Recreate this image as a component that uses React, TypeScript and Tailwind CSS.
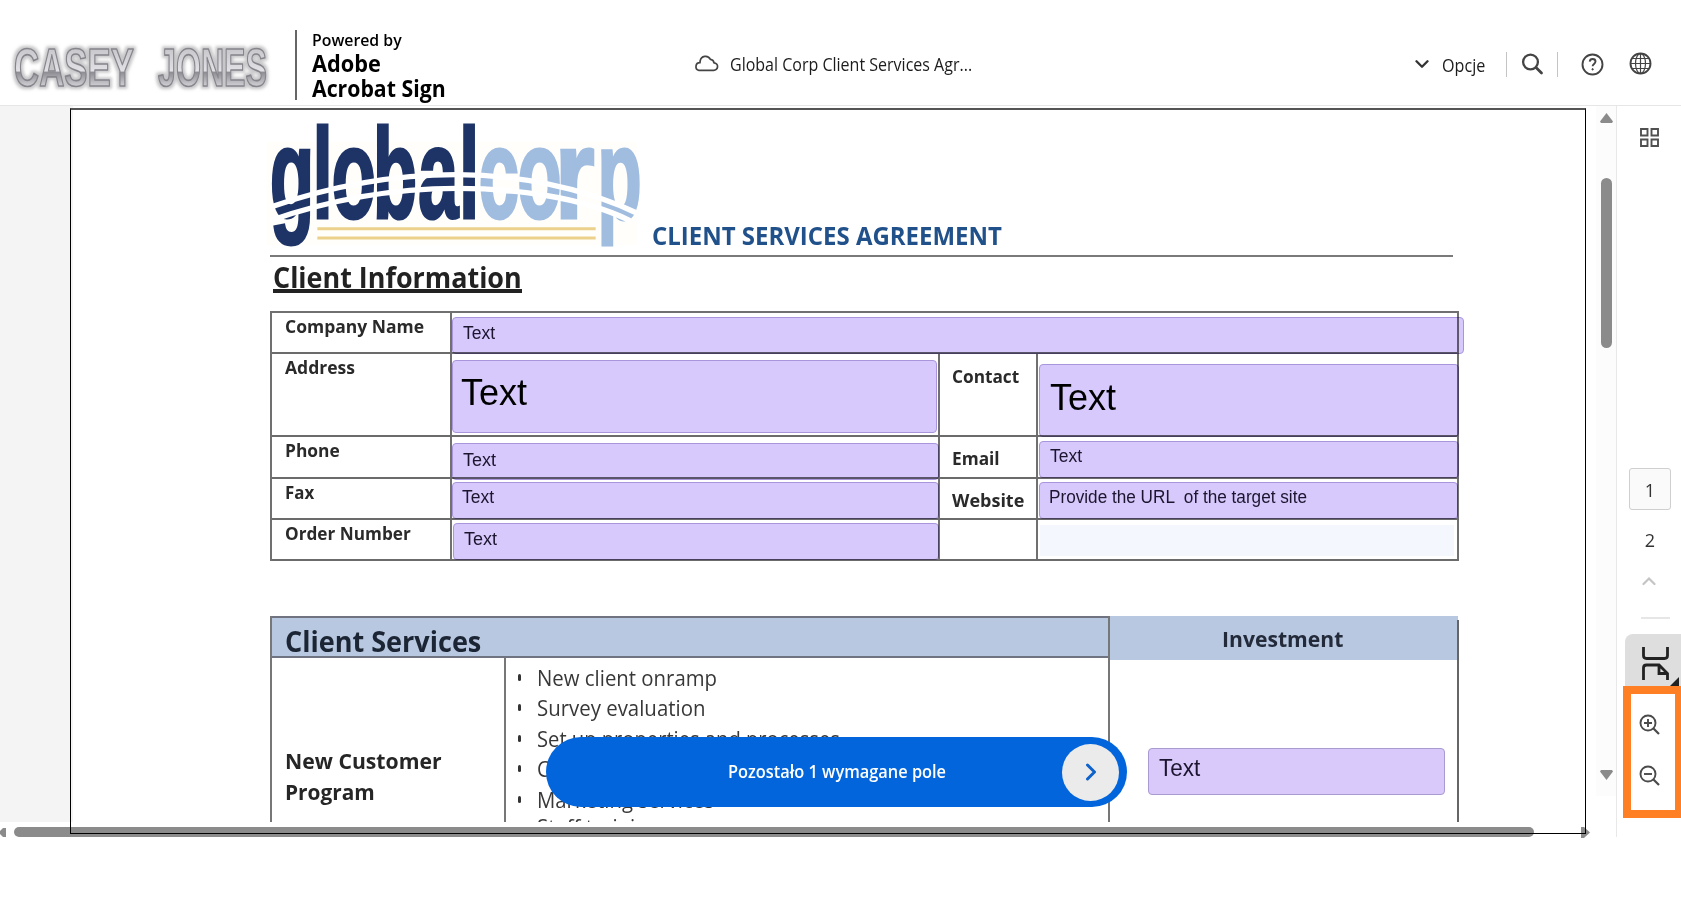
import { useLayoutEffect, useRef, useState } from "react";
import clsx from "clsx";

// Condenses or stretches a line of text so that it takes exactly `w` pixels.
function Fit({ w, className, children }: { w: number; className?: string; children: string }) {
  const ref = useRef<HTMLSpanElement>(null);
  const [scale, setScale] = useState(1);

  useLayoutEffect(() => {
    if (ref.current) setScale(w / ref.current.offsetWidth);
  }, [w, children]);

  return (
    <span className={clsx("flex leading-none", className)} style={{ width: w }}>
      <span ref={ref} className="shrink-0 origin-left whitespace-pre" style={{ transform: `scaleX(${scale})` }}>
        {children}
      </span>
    </span>
  );
}

const fields = [
  { box: "left-[379px] top-[211px] w-[1012px] h-[37px] pl-[10px] pt-[7px]", text: "Text", w: 32 },
  { box: "left-[379px] top-[254px] w-[485px] h-[73px] pl-[8px] pt-[14px]", text: "Text", w: 66, big: true },
  { box: "left-[966px] top-[258px] w-[420px] h-[73px] pl-[10px] pt-[15px]", text: "Text", w: 66, big: true },
  { box: "left-[379px] top-[337px] w-[487px] h-[37px] pl-[10px] pt-[8px]", text: "Text", w: 33 },
  { box: "left-[966px] top-[335px] w-[420px] h-[37px] pl-[10px] pt-[6px]", text: "Text", w: 32 },
  { box: "left-[379px] top-[376px] w-[487px] h-[37px] pl-[9px] pt-[6px]", text: "Text", w: 32 },
  { box: "left-[966px] top-[376px] w-[419px] h-[37px] pl-[9px] pt-[6px]", text: "Provide the URL  of the target site", w: 258 },
  { box: "left-[380px] top-[417px] w-[486px] h-[37px] pl-[10px] pt-[7px]", text: "Text", w: 33 },
];

const rows = [
  { h: "h-[41px]", label: "Company Name", w: 139 },
  { h: "h-[83px]", label: "Address", w: 70, right: "Contact", rw: 67, rp: "pt-[13px]" },
  { h: "h-[42px]", label: "Phone", w: 55, right: "Email", rw: 48, rp: "pt-[12px]" },
  { h: "h-[41px]", label: "Fax", w: 29, right: "Website", rw: 72, rp: "pt-[12px]" },
  { h: "h-[41px]", label: "Order Number", w: 126, right: "", rw: 0, rp: "" },
];

const services = [
  { text: "New client onramp", w: 180 },
  { text: "Survey evaluation", w: 168 },
  { text: "Set up properties and processes", w: 303 },
  { text: "Contract services", w: 160 },
  { text: "Marketing services", w: 177 },
  { text: "Staff training", w: 122 },
];

function CaseyLogo() {
  return (
    <svg width="278" height="60" viewBox="0 0 278 60" className="block overflow-visible">
      <defs>
        <linearGradient id="steel" gradientUnits="userSpaceOnUse" x1="0" y1="10" x2="0" y2="49">
          <stop offset="0" stopColor="#c6c5ca" />
          <stop offset="0.62" stopColor="#e2e1e6" />
          <stop offset="0.64" stopColor="#8d8c92" />
          <stop offset="1" stopColor="#d0cfd4" />
        </linearGradient>
        <filter id="halo" x="-10%" y="-30%" width="120%" height="160%">
          <feMorphology in="SourceAlpha" operator="dilate" radius="2" result="fat" />
          <feGaussianBlur in="fat" stdDeviation="1.8" result="soft" />
          <feFlood floodColor="#b4b4b7" floodOpacity="0.75" />
          <feComposite in2="soft" operator="in" result="glow" />
          <feMerge>
            <feMergeNode in="glow" />
            <feMergeNode in="SourceGraphic" />
          </feMerge>
        </filter>
      </defs>
      <g fontFamily="Liberation Sans" fontWeight="700" fontSize="53" strokeLinejoin="round" fill="url(#steel)" stroke="#86858b" strokeWidth="1.7" filter="url(#halo)">
        <text x="14" y="48.5" textLength="120" lengthAdjust="spacingAndGlyphs">CASEY</text>
        <text x="158" y="48.5" textLength="109" lengthAdjust="spacingAndGlyphs">JONES</text>
      </g>
    </svg>
  );
}

function GlobalCorpLogo() {
  return (
    <svg width="385" height="145" viewBox="0 0 1155 435" className="shrink-0 overflow-visible">
      <rect x="20" y="95" width="1110" height="310" fill="#fffefb" />
      <g fontFamily="Liberation Sans" fontWeight="700" fontSize="384" strokeWidth="9">
        <text transform="translate(0 324) scale(0.57 1)" x="51 276 376 594 831 1048" fill="#1e3467" stroke="#1e3467">global</text>
        <g fill="#a0bde0" stroke="#a0bde0">
          <text transform="translate(0 324) scale(0.57 1)" x="1150 1354">co</text>
          <text transform="translate(884 324) scale(0.8 1)">r</text>
          <text transform="translate(1012 324) scale(0.57 1)">p</text>
        </g>
      </g>
      <g fill="none" stroke="#fff" strokeWidth="16">
        <path d="M30 292C250 215 430 194 590 194S960 225 1150 318" />
        <path d="M30 332C250 255 430 235 590 235S960 258 1110 332" />
      </g>
      <path d="M172 356H1007M172 384H1007" stroke="#ecd18c" strokeWidth="9" />
    </svg>
  );
}

function Header() {
  return (
    <header className="flex h-[106px] border-b border-[#e6e6e6] text-black">
      <div className="w-[295px] pt-[37px]">
        <CaseyLogo />
      </div>
      <div className="mt-[30px] h-[70px] w-[2px] bg-[#666]" />
      <div className="w-[397px] pl-[15px] pt-[32px]">
        <Fit w={90} className="text-[16px] font-semibold">Powered by</Fit>
        <Fit w={69} className="mt-[4px] text-[23px] font-bold">Adobe</Fit>
        <Fit w={134} className="mt-[2px] text-[23px] font-bold">Acrobat Sign</Fit>
      </div>
      <svg className="mt-[53px]" width="25" height="20" viewBox="0 0 25 20" fill="none" stroke="#444" strokeWidth="1.7">
        <path d="M5 17.4h14.5a3.8 3.8 0 0 0 .5-7.6 4 4 0 0 0-3.6-3.4A5.4 5.4 0 0 0 6.2 8a5 5 0 0 0-.2 1.7A3.9 3.9 0 0 0 5 17.4Z" strokeLinejoin="round" />
      </svg>
      <div className="w-[696px] pl-[11px] pt-[55px] text-[#1c1c1c]">
        <Fit w={242} className="text-[18px] font-medium">Global Corp Client Services Agr...</Fit>
      </div>
      <svg className="mt-[59px]" width="14" height="11" viewBox="0 0 14 11" fill="none" stroke="#333" strokeWidth="2.3">
        <path d="M1.5 2.2 7 7.7l5.5-5.5" strokeLinecap="round" strokeLinejoin="round" />
      </svg>
      <div className="ml-[13px] mt-[56px] w-[64px] text-[#1c1c1c]">
        <Fit w={43} className="text-[18px] font-medium">Opcje</Fit>
      </div>
      <div className="mt-[52px] h-[25px] w-px bg-[#c4c4c4]" />
      <svg className="ml-[14px] mt-[53px]" width="23" height="23" viewBox="0 0 23 23" fill="none" stroke="#444" strokeWidth="2.3">
        <circle cx="9.5" cy="9" r="7.4" />
        <path d="m15 14.5 5.5 5.5" strokeWidth="2.8" strokeLinecap="round" />
      </svg>
      <div className="ml-[13px] mt-[52px] h-[25px] w-px bg-[#c4c4c4]" />
      <svg className="ml-[23px] mt-[53px]" width="23" height="23" viewBox="0 0 23 23" fill="none" stroke="#444" strokeWidth="1.9">
        <circle cx="11.5" cy="11.5" r="10" />
        <path d="M8.7 8.6c.2-1.7 1.4-2.6 2.9-2.6 1.7 0 2.9 1 2.9 2.5 0 2.3-2.9 2.5-2.9 4.7" />
        <circle cx="11.6" cy="16.3" r="0.7" fill="#444" strokeWidth="1" />
      </svg>
      <svg className="ml-[25px] mt-[52px]" width="23" height="23" viewBox="0 0 23 23" fill="none" stroke="#444" strokeWidth="1.2">
        <circle cx="11.5" cy="11.5" r="10" strokeWidth="1.9" />
        <ellipse cx="11.5" cy="11.5" rx="5" ry="10" />
        <path d="M11.5 1.5v20M1.5 11.5h20M3 6.5h17M3 16.5h17" />
      </svg>
    </header>
  );
}

function InfoTable() {
  return (
    <div className="mt-[18px] w-[1189px] border-l-2 border-t-2 border-[#707070]">
      {rows.map((r) => (
        <div key={r.label} className={clsx("flex border-b-2 border-[#6b6b6b] text-[18px] font-bold text-[#2a2a2a]", r.h)}>
          <div className="w-[180px] border-r-2 border-[#707070] pl-[13px] pt-[4px]">
            <Fit w={r.w}>{r.label}</Fit>
          </div>
          {r.right === undefined ? (
            <div className="w-[1007px] border-r-2 border-[#707070]" />
          ) : (
            <>
              <div className="w-[488px] border-r-2 border-[#707070]" />
              <div className={clsx("w-[98px] border-r-2 border-[#707070] pl-[12px]", r.rp)}>
                {r.right && <Fit w={r.rw}>{r.right}</Fit>}
              </div>
              <div className="w-[421px] border-r-2 border-[#707070] pb-[3px] pl-[2px] pr-[3px] pt-[5px]">
                {!r.right && <div className="h-full bg-[#f4f7fd]" />}
              </div>
            </>
          )}
        </div>
      ))}
    </div>
  );
}

function ServicesTable() {
  return (
    <div className="mt-[55px] flex h-[206px] w-[1189px] text-[#262626]">
      <div className="w-[840px] border-x-2 border-[#777]">
        <div className="h-[42px] border-y-2 border-[#6f7480] bg-[#b8c8e1] pl-[13px] pt-[9px] text-[#1c2533]">
          <Fit w={196} className="text-[28px] font-bold">Client Services</Fit>
        </div>
        <div className="flex h-[164px]">
          <div className="w-[234px] border-r-2 border-[#777] pl-[13px] pt-[91px] text-[22px] font-bold">
            <Fit w={157}>New Customer</Fit>
            <Fit w={90} className="mt-[9px]">Program</Fit>
          </div>
          <ul className="h-[164px] overflow-hidden pl-[12px] pt-[4px] text-[21.5px] text-[#383838]">
            {services.map((s) => (
              <li key={s.text} className="flex h-[30.4px] pt-[5px] last:-mt-[3px]">
                <span className="mt-[7px] h-[7px] w-[3px] rounded-sm bg-[#333]" />
                <Fit w={s.w} className="ml-[16px]">{s.text}</Fit>
              </li>
            ))}
          </ul>
        </div>
      </div>
      <div className="w-[349px]">
        <div className="mr-px h-[44px] bg-[#b8c8e1] pl-[112px] pt-[11px] text-[22px] font-bold text-[#232a3a]">
          <Fit w={121}>Investment</Fit>
        </div>
      </div>
      <div className="-ml-[2px] mt-[4px] w-[2px] shrink-0 bg-[#666]" />
    </div>
  );
}

function Sheet() {
  return (
    <div className="relative h-[716px] w-[1523px] overflow-hidden bg-white pl-[187px] pt-[4px]">
      <div className="flex">
        <GlobalCorpLogo />
        <div className="pl-[7px] pt-[113px] text-[#21518a]">
          <Fit w={350} className="text-[25px] font-bold">CLIENT SERVICES AGREEMENT</Fit>
        </div>
      </div>
      <div className="pl-[10px]">
        <div className="h-[2px] w-[1183px] bg-[#7a7a7a]" />
        <h1 className="ml-[3px] mt-[6px] h-[30px] w-[249px] border-b-4 border-[#222] text-[28px] font-bold text-[#222]">
          <Fit w={249}>Client Information</Fit>
        </h1>
        <InfoTable />
        <ServicesTable />
      </div>

      {fields.map((f) => (
        <div
          key={f.box}
          className={clsx(
            "absolute rounded-[4px] border border-[#a995dc] bg-[#d7c9fb] font-['Liberation_Sans',sans-serif] text-[#1c1530] mix-blend-multiply",
            f.box,
          )}
        >
          <Fit w={f.w} className={f.big ? "text-[36px] text-black" : "text-[17.5px]"}>{f.text}</Fit>
        </div>
      ))}
      <div className="absolute left-[1075px] top-[642px] h-[47px] w-[297px] rounded-[4px] border-[1.5px] border-[#a99ad0] bg-[#d9c9fb] pl-[10px] pt-[8px] font-['Liberation_Sans',sans-serif] text-[23px] text-[#1c1530]">
        <Fit w={41}>Text</Fit>
      </div>

      <button className="absolute left-[473px] top-[631px] flex h-[70px] w-[581px] items-center rounded-full bg-[#0265dc] pl-[182px] text-white">
        <Fit w={218} className="-mt-[2px] text-[18px] font-semibold">Pozostało 1 wymagane pole</Fit>
        <span className="ml-auto mr-[8px] flex size-[57px] items-center justify-center rounded-full bg-[#ebebeb]">
          <svg width="12" height="18" viewBox="0 0 12 18" fill="none" stroke="#0f62cc" strokeWidth="3">
            <path d="m2.5 2 7 7-7 7" strokeLinecap="round" strokeLinejoin="round" />
          </svg>
        </span>
      </button>
    </div>
  );
}

function Rail() {
  return (
    <aside className="flex w-[65px] flex-col border-l border-[#e8e8e8] pl-[8px]">
      <svg className="ml-[15px] mt-[22px] shrink-0" width="19" height="19" viewBox="0 0 19 19" fill="none" stroke="#505050" strokeWidth="1.9">
        <path d="M1 1h6.5v6.5H1zM11.5 1H18v6.5h-6.5zM1 11.5h6.5V18H1zM11.5 11.5H18V18h-6.5z" />
      </svg>
      <div className="ml-[4px] mt-[321px] flex h-[42px] w-[42px] shrink-0 items-center justify-center rounded-[3px] border border-[#cfcfcf] bg-[#fafafa] pt-[2px] text-[18px] text-[#333]">1</div>
      <div className="ml-[4px] mt-[18px] w-[42px] text-center text-[18px] leading-6 text-[#333]">2</div>
      <svg className="ml-[17px] mt-[24px] shrink-0" width="14" height="10" viewBox="0 0 14 10" fill="none" stroke="#c4c4c4" strokeWidth="2.2">
        <path d="m1.5 8 5.5-5.5L12.5 8" strokeLinecap="round" />
      </svg>
      <div className="ml-[16px] mt-[31px] h-[2px] w-[29px] shrink-0 bg-[#e6e6e6]" />
      <div className="mt-[15px] h-[53px] shrink-0 rounded-tl-lg bg-[#dedede]">
        <svg width="56" height="53" viewBox="0 0 56 53" fill="none" stroke="#222" strokeWidth="2.8">
          <path d="M18.5 13v8.500q0 3 3 3h18q3 0 3-3V13" />
          <path d="M18.5 46V34q0-3 3-3H34l8.500 8.500V46M34 31v8.500h8.500" />
          <path d="M54 43v9h-9z" fill="#222" stroke="none" />
        </svg>
      </div>
      <div className="-ml-[2px] -mt-px flex h-[132px] w-[58px] shrink-0 flex-col border-8 border-r-[6px] border-[#ff8024] bg-white pl-[8px] pt-[20px]">
        {["M5 9h8M9 5v8", "M5 9h8"].map((sign) => (
          <svg key={sign} className="mb-[29px] shrink-0" width="22" height="22" viewBox="0 0 22 22" fill="none" stroke="#4b4b4b" strokeWidth="1.9">
            <circle cx="9" cy="9" r="7.5" />
            <path d={sign} />
            <path d="m14.5 14.5 5.5 5.5" strokeWidth="2.2" />
          </svg>
        ))}
      </div>
    </aside>
  );
}

export default function App() {
  return (
    <div className="h-[900px] w-[1681px] overflow-hidden bg-white font-['Open_Sans',sans-serif]">
      <Header />
      <main className="relative flex h-[731px]">
        <div className="w-[1616px]">
          <div className="flex h-[716px]">
            <div className="w-[73px] bg-[#f4f4f4]" />
            <Sheet />
            <div className="flex h-[690px] w-[20px] flex-col items-center bg-[#fcfcfc] pt-[7px]">
              <svg width="13" height="10" viewBox="0 0 13 10"><path d="M6.5 0 13 8.5 12 10H1L0 8.5z" fill="#8b8b8b" /></svg>
              <div className="mt-[55px] h-[170px] w-[11px] rounded-full bg-[#8b8b8b]" />
              <svg className="mt-[422px]" width="13" height="10" viewBox="0 0 13 10"><path d="M6.5 10 13 1.5 12 0H1L0 1.5z" fill="#8b8b8b" /></svg>
            </div>
          </div>
          <div className="mt-[5px] flex h-[10px] items-center">
            <svg width="6" height="9" viewBox="0 0 6 9"><path d="M6 0v9H3L0 6V3l3-3z" fill="#8b8b8b" /></svg>
            <div className="ml-[8px] h-[10px] w-[1520px] rounded-full bg-[#8b8b8b]" />
            <svg className="ml-[47px]" width="9" height="11" viewBox="0 0 9 11"><path d="M0 0h3l6 5.5L3 11H0z" fill="#8b8b8b" /></svg>
          </div>
        </div>
        <Rail />
        {/* page focus outline, crosses the bottom scrollbar */}
        <div className="pointer-events-none absolute left-[70px] top-[2px] h-[726px] w-[1516px] border border-t-2 border-black border-t-[#555]" />
      </main>
    </div>
  );
}
